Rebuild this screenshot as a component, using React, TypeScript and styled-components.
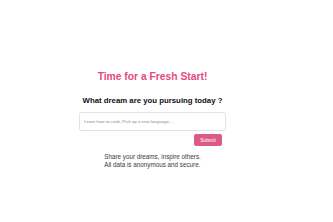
import * as React from "react";
import { useState } from "react";
import styled, { createGlobalStyle } from "styled-components";

const GlobalStyle = createGlobalStyle`
  html, body {
    margin: 0;
    padding: 0;
    background: #ffffff;
    font-family: "Liberation Sans", Arial, sans-serif;
  }
`;

const Page = styled.main`
  display: flex;
  flex-direction: column;
  align-items: center;
  padding: 71px 28px 0 0;
`;

const Title = styled.h1`
  margin: 0;
  font-size: 10.3px;
  font-weight: 700;
  color: #e5497f;
  line-height: 12px;
`;

const Question = styled.h2`
  margin: 13px 0 0;
  font-size: 7.8px;
  font-weight: 700;
  color: #111111;
  line-height: 10px;
`;

const Form = styled.form`
  display: flex;
  flex-direction: column;
  align-items: flex-end;
  width: 147px;
  margin-top: 6px;
`;

const DreamInput = styled.input`
  box-sizing: border-box;
  width: 100%;
  height: 19px;
  padding: 0 4px;
  border: 1px solid #e3e3e3;
  border-radius: 2px;
  font-family: inherit;
  font-size: 4.4px;
  color: #333;
  outline: none;

  &::placeholder {
    color: #8a8a8a;
  }
`;

const SubmitButton = styled.button`
  margin: 3px 4px 0 0;
  width: 28px;
  height: 12px;
  padding: 0;
  border: none;
  border-radius: 2px;
  background: #dc5a86;
  color: #ffffff;
  font-family: inherit;
  font-size: 5px;
  cursor: pointer;
`;

const Note = styled.p`
  margin: 6.5px 0 0;
  font-size: 6.3px;
  line-height: 8px;
  color: #3a3a3a;
  text-align: left;
`;

export default function App() {
  const [dream, setDream] = useState("");

  return (
    <>
      <GlobalStyle />
      <Page>
        <Title>Time for a Fresh Start!</Title>
        <Question>What dream are you pursuing today ?</Question>
        <Form onSubmit={(e) => e.preventDefault()}>
          <DreamInput
            value={dream}
            onChange={(e) => setDream(e.target.value)}
            placeholder="Learn how to cook, Pick up a new language, ..."
          />
          <SubmitButton type="submit">Submit</SubmitButton>
        </Form>
        <Note>
          Share your dreams, inspire others.
          <br />
          All data is anonymous and secure.
        </Note>
      </Page>
    </>
  );
}
